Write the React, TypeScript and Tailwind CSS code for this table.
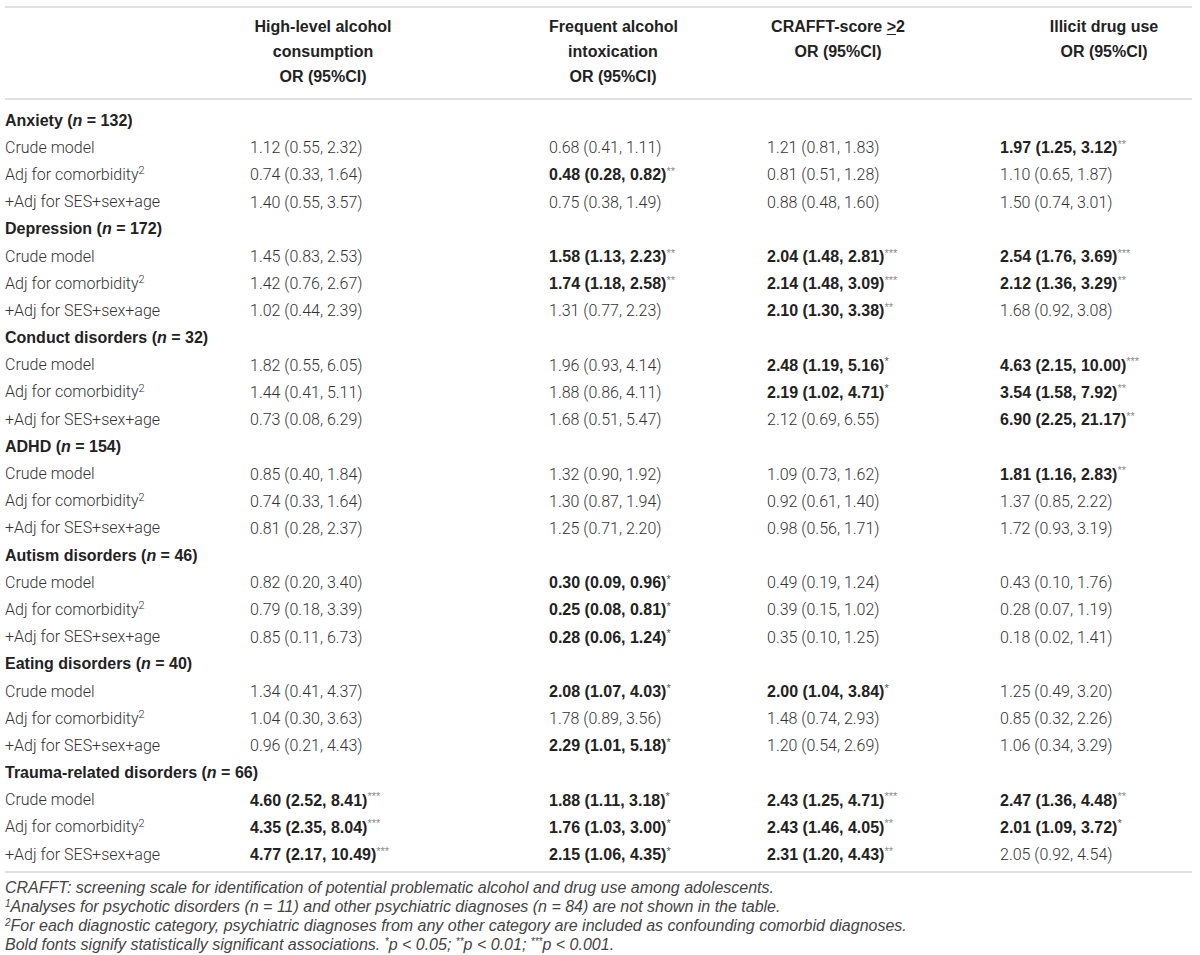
import React from "react";

type Cell = [string, boolean, string];

const L = (t: string): Cell => [t, false, ""];
const B = (t: string, s: string): Cell => [t, true, s];

type Group = { name: string; n: string; rows: Cell[][] };

const groups: Group[] = [
  {
    name: "Anxiety",
    n: "132",
    rows: [
      [L("1.12 (0.55, 2.32)"), L("0.68 (0.41, 1.11)"), L("1.21 (0.81, 1.83)"), B("1.97 (1.25, 3.12)", "**")],
      [L("0.74 (0.33, 1.64)"), B("0.48 (0.28, 0.82)", "**"), L("0.81 (0.51, 1.28)"), L("1.10 (0.65, 1.87)")],
      [L("1.40 (0.55, 3.57)"), L("0.75 (0.38, 1.49)"), L("0.88 (0.48, 1.60)"), L("1.50 (0.74, 3.01)")],
    ],
  },
  {
    name: "Depression",
    n: "172",
    rows: [
      [L("1.45 (0.83, 2.53)"), B("1.58 (1.13, 2.23)", "**"), B("2.04 (1.48, 2.81)", "***"), B("2.54 (1.76, 3.69)", "***")],
      [L("1.42 (0.76, 2.67)"), B("1.74 (1.18, 2.58)", "**"), B("2.14 (1.48, 3.09)", "***"), B("2.12 (1.36, 3.29)", "**")],
      [L("1.02 (0.44, 2.39)"), L("1.31 (0.77, 2.23)"), B("2.10 (1.30, 3.38)", "**"), L("1.68 (0.92, 3.08)")],
    ],
  },
  {
    name: "Conduct disorders",
    n: "32",
    rows: [
      [L("1.82 (0.55, 6.05)"), L("1.96 (0.93, 4.14)"), B("2.48 (1.19, 5.16)", "*"), B("4.63 (2.15, 10.00)", "***")],
      [L("1.44 (0.41, 5.11)"), L("1.88 (0.86, 4.11)"), B("2.19 (1.02, 4.71)", "*"), B("3.54 (1.58, 7.92)", "**")],
      [L("0.73 (0.08, 6.29)"), L("1.68 (0.51, 5.47)"), L("2.12 (0.69, 6.55)"), B("6.90 (2.25, 21.17)", "**")],
    ],
  },
  {
    name: "ADHD",
    n: "154",
    rows: [
      [L("0.85 (0.40, 1.84)"), L("1.32 (0.90, 1.92)"), L("1.09 (0.73, 1.62)"), B("1.81 (1.16, 2.83)", "**")],
      [L("0.74 (0.33, 1.64)"), L("1.30 (0.87, 1.94)"), L("0.92 (0.61, 1.40)"), L("1.37 (0.85, 2.22)")],
      [L("0.81 (0.28, 2.37)"), L("1.25 (0.71, 2.20)"), L("0.98 (0.56, 1.71)"), L("1.72 (0.93, 3.19)")],
    ],
  },
  {
    name: "Autism disorders",
    n: "46",
    rows: [
      [L("0.82 (0.20, 3.40)"), B("0.30 (0.09, 0.96)", "*"), L("0.49 (0.19, 1.24)"), L("0.43 (0.10, 1.76)")],
      [L("0.79 (0.18, 3.39)"), B("0.25 (0.08, 0.81)", "*"), L("0.39 (0.15, 1.02)"), L("0.28 (0.07, 1.19)")],
      [L("0.85 (0.11, 6.73)"), B("0.28 (0.06, 1.24)", "*"), L("0.35 (0.10, 1.25)"), L("0.18 (0.02, 1.41)")],
    ],
  },
  {
    name: "Eating disorders",
    n: "40",
    rows: [
      [L("1.34 (0.41, 4.37)"), B("2.08 (1.07, 4.03)", "*"), B("2.00 (1.04, 3.84)", "*"), L("1.25 (0.49, 3.20)")],
      [L("1.04 (0.30, 3.63)"), L("1.78 (0.89, 3.56)"), L("1.48 (0.74, 2.93)"), L("0.85 (0.32, 2.26)")],
      [L("0.96 (0.21, 4.43)"), B("2.29 (1.01, 5.18)", "*"), L("1.20 (0.54, 2.69)"), L("1.06 (0.34, 3.29)")],
    ],
  },
  {
    name: "Trauma-related disorders",
    n: "66",
    rows: [
      [B("4.60 (2.52, 8.41)", "***"), B("1.88 (1.11, 3.18)", "*"), B("2.43 (1.25, 4.71)", "***"), B("2.47 (1.36, 4.48)", "**")],
      [B("4.35 (2.35, 8.04)", "***"), B("1.76 (1.03, 3.00)", "*"), B("2.43 (1.46, 4.05)", "**"), B("2.01 (1.09, 3.72)", "*")],
      [B("4.77 (2.17, 10.49)", "***"), B("2.15 (1.06, 4.35)", "*"), B("2.31 (1.20, 4.43)", "**"), L("2.05 (0.92, 4.54)")],
    ],
  },
];

const light = "font-['Roboto',sans-serif] font-light text-[#333]";
const bold = "font-['Liberation_Sans',Arial,sans-serif] font-bold text-[#222]";

function Value({ c }: { c: Cell }) {
  const [t, b, s] = c;
  return (
    <span className="whitespace-nowrap">
      <span className={b ? bold : light}>{t}</span>
      {s === "*" && (
        <sup className="font-['Liberation_Sans',Arial,sans-serif] text-[11px] text-[#555] font-normal">*</sup>
      )}
      {s.length > 1 && (
        <sup className="font-['Liberation_Sans',Arial,sans-serif] text-[11px] text-[#8a8a8a] font-normal">{s}</sup>
      )}
    </span>
  );
}

const labels = [
  <>Crude model</>,
  <>
    Adj for comorbidity<sup className="text-[11px]">2</sup>
  </>,
  <>+Adj for SES+sex+age</>,
];

const gridCols = "grid grid-cols-[245px_299px_218px_233px_1fr]";

export default function App() {
  return (
    <div className="w-[1200px] h-[955px] bg-white overflow-hidden">
      <div className="ml-[5px] w-[1187px] pt-[6px] text-[16px]">
        <div className="h-[2px] bg-[#e0e0e0]" />
        {/* Header */}
        <div className={`${gridCols} pt-[6px] pb-[9px] leading-[25px] whitespace-nowrap ${bold}`}>
          <div />
          <div>
            <div className="w-[146px] text-center">
              High-level alcohol
              <br />
              consumption
              <br />
              OR (95%CI)
            </div>
          </div>
          <div>
            <div className="w-[128px] text-center">
              Frequent alcohol
              <br />
              intoxication
              <br />
              OR (95%CI)
            </div>
          </div>
          <div>
            <div className="w-[142px] text-center">
              CRAFFT-score <span className="underline underline-offset-2">&gt;</span>2
              <br />
              OR (95%CI)
            </div>
          </div>
          <div>
            <div className="ml-[14px] w-[180px] text-center">
              Illicit drug use
              <br />
              OR (95%CI)
            </div>
          </div>
        </div>
        <div className="h-[2px] bg-[#e0e0e0]" />
        {/* Body */}
        <div className="pt-[7px] pb-[3px]">
          {groups.map((g) => (
            <div key={g.name}>
              <div className={`h-[27.2px] flex items-center ${bold}`}>
                {g.name} (<span className="italic">n</span>&nbsp;= {g.n})
              </div>
              {g.rows.map((r, i) => (
                <div key={i} className={`${gridCols} h-[27.2px] items-center`}>
                  <div className={light}>{labels[i]}</div>
                  {r.map((c, j) => (
                    <div key={j}>
                      <Value c={c} />
                    </div>
                  ))}
                </div>
              ))}
            </div>
          ))}
        </div>
        <div className="h-[2px] bg-[#e0e0e0]" />
        {/* Footnotes */}
        <div className="pt-[5px] text-[16px] leading-[19px] italic font-['Liberation_Sans',Arial,sans-serif] text-[#444]">
          <div>CRAFFT: screening scale for identification of potential problematic alcohol and drug use among adolescents.</div>
          <div>
            <sup className="text-[10px]">1</sup>Analyses for psychotic disorders (n = 11) and other psychiatric diagnoses (n = 84) are not shown in the table.
          </div>
          <div>
            <sup className="text-[10px]">2</sup>For each diagnostic category, psychiatric diagnoses from any other category are included as confounding comorbid diagnoses.
          </div>
          <div>
            Bold fonts signify statistically significant associations. <sup className="text-[10px]">*</sup>p &lt; 0.05; <sup className="text-[10px]">**</sup>p &lt; 0.01; <sup className="text-[10px]">***</sup>p &lt; 0.001.
          </div>
        </div>
      </div>
    </div>
  );
}
